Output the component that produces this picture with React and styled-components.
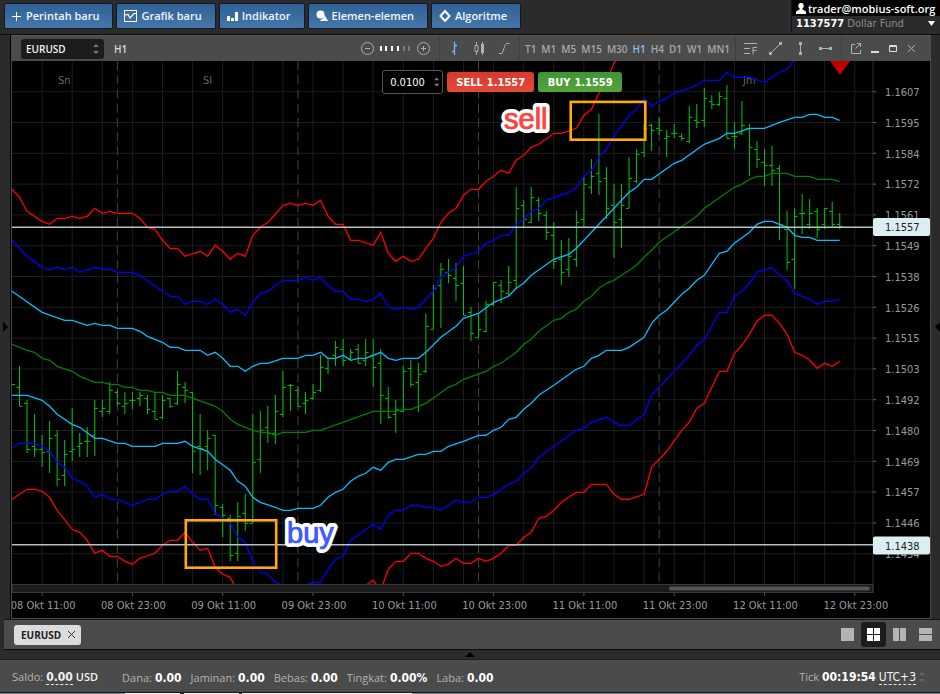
import React, { useState } from "react";
import styled, { createGlobalStyle } from "styled-components";

const GlobalStyle = createGlobalStyle`
  * {
    box-sizing: border-box;
  }

  body {
    margin: 0;
    background: #2b2b2b;
    color: #fff;
    font-family: "Open Sans", "Noto Sans", sans-serif;
    font-size: 11px;
  }

  button, input, select {
    margin: 0;
    padding: 0;
    border: 0;
    background: none;
    color: inherit;
    font: inherit;
  }

  button {
    cursor: pointer;
  }

  svg {
    display: block;
  }
`;

const tahoma = `"DejaVu Sans Condensed", "DejaVu Sans", sans-serif`;

const Page = styled.div`
  display: flex;
  flex-direction: column;
  min-height: 100vh;
`;

const Header = styled.header`
  display: flex;
  justify-content: space-between;
  align-items: flex-start;
  height: 35px;
  border-bottom: 1px solid #0a0a0a;
`;

const Menu = styled.nav`
  display: flex;
  gap: 3px;
  padding: 3px 4px;
`;

const MenuButton = styled.button`
  display: flex;
  align-items: center;
  gap: 4px;
  height: 26px;
  padding: 0 13px 2px 7px;
  border: 1px solid #0f1a28;
  border-radius: 2px;
  background: linear-gradient(to bottom, #2f6197, #4577ab);
  color: #eef4fa;
  font-weight: 600;
  white-space: nowrap;
`;

const Account = styled.div`
  width: 149px;
  border-left: 1px solid #111;
  white-space: nowrap;
`;

const AccountUser = styled.div`
  display: flex;
  align-items: center;
  gap: 2px;
  height: 16px;
  padding-left: 4px;
  background: #000;
  font-weight: 600;
`;

const AccountNumber = styled.div`
  display: flex;
  align-items: center;
  justify-content: space-between;
  height: 16px;
  padding: 0 5px 2px 4px;
  color: #8c8c8c;
  font-family: ${tahoma};
  font-size: 11px;

  b {
    color: #fff;
  }
`;

const Main = styled.main`
  display: flex;
  flex: 1;
`;

const Rail = styled.button`
  display: flex;
  align-items: center;
  justify-content: ${({ $side }) => ($side === "left" ? "flex-start" : "flex-end")};
  width: ${({ $side }) => ($side === "left" ? "11px" : "9px")};
  padding: ${({ $side }) => ($side === "left" ? "0 0 0 3px" : "0")};
  border-right: ${({ $side }) => ($side === "left" ? "1px solid #000" : "0")};
  background: #2b2b2b;
`;

const ChartWindow = styled.section`
  flex: 1;
  min-width: 0;
  border: 1px solid #4b4b4b;
  border-top: 0;
  background: #000;
`;

const ChartBar = styled.div`
  display: flex;
  align-items: stretch;
  height: 26px;
  border-top: 1px solid #5a5a5a;
  background: #4b4b4b;
  color: #a8a8a8;
  font-size: 10px;
  font-weight: 600;
`;

const BarGroup = styled.div`
  display: flex;
  align-items: center;
  gap: ${({ $gap }) => $gap || 0}px;
  padding: 0 ${({ $right }) => $right ?? 5}px 0 ${({ $left }) => $left ?? 5}px;
  border-right: ${({ $last }) => ($last ? "0" : "1px solid #404040")};
  ${({ $push }) => $push && "margin-left: auto;"}
`;

const IconButton = styled.button`
  display: flex;
  align-items: center;
  justify-content: center;
  color: ${({ $active }) => ($active ? "#7db8ec" : "#b0b0b0")};
`;

const SymbolField = styled.label`
  position: relative;
  display: flex;
  align-items: center;
  width: 83px;
  height: 20px;
  border-radius: 3px;
  background: #1c1c1c;
  color: #f2f2f2;

  svg {
    position: absolute;
    right: 5px;
    pointer-events: none;
  }
`;

const SymbolSelect = styled.select`
  appearance: none;
  width: 100%;
  height: 100%;
  padding: 0 18px 0 5px;
`;

const Period = styled.span`
  color: #d8d8d8;
`;

const TimeframeButton = styled.button`
  color: ${({ $active }) => ($active ? "#86bff0" : "#a8a8a8")};
`;

const ChartBody = styled.div`
  position: relative;
`;

const ChartSvg = styled.svg`
  width: 100%;
  height: auto;
`;

const OrderPanel = styled.form`
  position: absolute;
  top: 9px;
  left: 40%;
  display: flex;
  align-items: center;
  gap: 4px;
  padding-left: 3px;
  font-family: ${tahoma};
`;

const VolumeField = styled.label`
  display: flex;
  align-items: center;
  width: 61px;
  height: 24px;
  padding: 0 3px 0 7px;
  border: 1px solid #555;
  border-radius: 3px;
  background: #000;
`;

const VolumeInput = styled.input`
  width: 100%;
  min-width: 0;
  outline: 0;
`;

const TradeButton = styled.button`
  display: flex;
  align-items: center;
  justify-content: center;
  gap: 4px;
  width: ${({ $side }) => ($side === "sell" ? "87px" : "84px")};
  height: 20px;
  border-radius: 3px;
  background: ${({ $side }) =>
    $side === "sell"
      ? "linear-gradient(to bottom, #d8382f, #e34a37)"
      : "linear-gradient(to bottom, #3f9433, #55a43c)"};
  font-weight: 700;
`;

const TabBar = styled.div`
  display: flex;
  align-items: center;
  justify-content: space-between;
  height: 31px;
  margin-left: 4px;
  padding: 0 2px 0 10px;
  border-top: 1px solid #111;
  border-bottom: 1px solid #0a0a0a;
  background: #4b4b4b;
`;

const Tab = styled.div`
  display: flex;
  align-items: center;
  gap: 6px;
  height: 20px;
  padding: 0 5px 0 7px;
  border-radius: 3px;
  background: #dcdcdc;
  color: #222;
  font-size: 10px;
  font-weight: 700;
`;

const LayoutButtons = styled.div`
  display: flex;
  align-items: center;
  gap: 1px;
`;

const LayoutButton = styled.button`
  display: flex;
  align-items: center;
  justify-content: center;
  width: 25px;
  height: 25px;
  border-radius: 3px;
  background: ${({ $active }) => ($active ? "#1c1c1c" : "transparent")};
  color: ${({ $active }) => ($active ? "#fff" : "#b4b4b4")};
`;

const Splitter = styled.button`
  display: flex;
  align-items: center;
  justify-content: center;
  height: 10px;
  border-bottom: 1px solid #1d1d1d;
  background: #2b2b2b;
`;

const Footer = styled.footer`
  display: flex;
  align-items: center;
  gap: 9px;
  height: 32px;
  padding: 2px 15px 0 12px;
  background: #4b4b4b;
  white-space: nowrap;
`;

const Stat = styled.div`
  display: flex;
  align-items: baseline;
  gap: 3px;
  margin-right: ${({ $wide }) => ($wide ? "15px" : "0")};
  color: #b2b2b2;

  b {
    color: #fff;
    font-family: ${tahoma};
    font-size: 12px;
  }
`;

const Clock = styled.div`
  display: flex;
  align-items: center;
  gap: 3px;
  margin-left: auto;
`;

const Dashed = styled.button`
  border-bottom: 1px dashed #e6e6e6;
  color: #f2f2f2;
  font-family: ${tahoma};
  font-size: 12px;
  font-weight: ${({ $bold }) => ($bold ? 700 : 400)};
  line-height: 14px;
`;

const Currency = styled.span`
  color: #f2f2f2;
  font-weight: 600;
`;

const Taskbar = styled.div`
  height: 2px;
  border-top: 1px solid #16181b;
  background: linear-gradient(
    to right,
    #7d8590 125px,
    #f4f4f4 125px 180px,
    #333 180px 184px,
    #f4f4f4 184px 239px,
    #333 239px 242px,
    #f4f4f4 242px 412px,
    #7d8590 412px
  );
`;

const BAR = 7.525;
const LEFT = 12;
const xAt = (k) => LEFT + k * BAR;

// band points are [bar, y]
const bands = [
  {
    color: "#ff0000",
    points: [
      [0,189],[1,197],[2,211],[4,221],[5,224],[6,218],[7,218],[8,216],[9,218],[10,216],[11,208],[12,213],[13,211],
      [14,213],[16,213],[17,218],[18,227],[19,229],[20,240],[21,248],[22,248],[23,256],[25,251],[26,256],[27,245],
      [28,251],[29,259],[30,253],[31,256],[32,235],[33,227],[34,222],[35,214],[36,205],[37,203],[38,205],[39,203],
      [40,205],[41,200],[42,216],[43,224],[44,224],[45,240],[46,240],[48,245],[49,232],[50,253],[51,261],[52,256],
      [53,261],[54,259],[55,248],[56,238],[57,222],[58,213],[59,208],[60,195],[61,189],[62,189],[63,181],[64,176],
      [65,170],[66,173],[67,160],[68,155],[69,147],[70,144],[72,133],[73,133],[75,128],[76,115],[77,109],[78,93],
      [79,80],[80,63],[81,50],
    ],
  },
  {
    color: "#0000ff",
    points: [
      [0,240],[2,256],[4,267],[5,269],[6,267],[7,269],[8,267],[9,272],[11,267],[12,269],[13,269],[14,272],[16,272],
      [17,275],[20,291],[21,296],[22,296],[23,304],[24,301],[25,301],[26,304],[27,299],[28,304],[29,312],[30,309],
      [31,315],[32,302],[33,293],[34,291],[36,280],[38,280],[39,277],[40,280],[41,277],[42,285],[43,291],[44,291],
      [45,299],[46,299],[47,301],[48,299],[49,293],[50,307],[51,309],[52,307],[53,309],[54,307],[55,299],[56,291],
      [57,277],[59,267],[60,256],[62,251],[63,243],[64,240],[65,235],[66,235],[67,224],[68,219],[69,211],[70,208],
      [71,200],[74,192],[75,187],[76,176],[77,170],[78,157],[79,149],[80,136],[82,115],[83,109],[84,98],[85,106],
      [86,101],[87,98],[88,93],[91,85],[92,80],[94,80],[95,72],[96,77],[98,77],[100,82],[102,72],[103,69],[104,59],
    ],
  },
  {
    color: "#00bfff",
    points: [
      [0,291],[4,312],[7,320],[8,320],[10,325],[11,323],[12,325],[13,325],[14,328],[16,328],[17,331],[18,336],
      [20,342],[21,347],[22,347],[23,350],[25,350],[26,355],[27,352],[28,358],[29,366],[30,366],[31,371],[32,366],
      [33,363],[34,363],[36,358],[38,358],[39,355],[40,355],[41,352],[42,358],[43,358],[44,355],[45,360],[46,358],
      [47,358],[49,352],[50,358],[51,360],[52,358],[54,358],[55,352],[57,337],[59,326],[60,318],[62,313],[64,302],
      [66,296],[67,288],[68,283],[69,275],[72,259],[74,254],[75,248],[80,208],[82,192],[83,187],[84,179],[85,179],
      [88,163],[89,160],[92,144],[94,138],[95,133],[96,133],[98,128],[100,128],[102,122],[104,117],[105,117],
      [106,114],[107,114],[108,117],[109,117],[110,120],
    ],
  },
  {
    color: "#008000",
    points: [
      [0,344],[2,350],[3,352],[4,358],[5,360],[6,366],[8,371],[9,376],[11,382],[12,382],[13,384],[14,384],[15,387],
      [16,387],[17,390],[18,390],[19,392],[20,392],[21,395],[23,395],[27,406],[28,411],[29,419],[30,424],[32,430],
      [33,432],[34,432],[35,435],[36,432],[39,432],[40,430],[41,430],[48,411],[51,411],[52,409],[53,409],[55,403],
      [58,387],[59,384],[60,379],[63,371],[64,366],[65,363],[67,352],[68,344],[69,339],[70,331],[72,320],[73,318],
      [74,312],[75,309],[76,301],[77,296],[78,288],[79,283],[80,280],[81,275],[83,265],[84,257],[85,250],[86,242],
      [91,216],[92,208],[96,187],[97,184],[98,179],[99,176],[100,176],[101,173],[103,173],[104,176],[106,176],
      [107,179],[109,179],[110,181],
    ],
  },
  {
    color: "#00bfff",
    points: [
      [0,395],[2,395],[4,400],[5,406],[6,414],[8,424],[9,427],[11,438],[12,438],[14,443],[15,443],[16,446],[19,446],
      [20,443],[22,443],[23,441],[24,446],[26,451],[27,459],[29,470],[30,481],[31,486],[32,497],[33,502],[35,507],
      [36,510],[37,510],[38,508],[40,508],[41,505],[42,497],[43,492],[44,489],[45,481],[46,476],[47,473],[48,467],
      [49,470],[50,462],[51,459],[52,459],[54,454],[55,454],[56,451],[57,451],[58,446],[60,441],[62,435],[63,435],
      [64,430],[65,427],[66,419],[67,417],[68,409],[69,403],[70,395],[72,385],[75,369],[76,366],[77,358],[78,355],
      [79,350],[81,350],[82,347],[84,337],[85,323],[86,315],[87,310],[89,294],[90,288],[91,280],[92,275],[94,253],
      [95,251],[96,243],[98,232],[99,224],[100,221],[101,221],[102,224],[103,227],[104,235],[105,237],[106,237],
      [107,240],[110,240],
    ],
  },
  {
    color: "#0000ff",
    points: [
      [0,448],[1,443],[3,443],[4,446],[5,451],[6,462],[7,467],[8,478],[9,481],[10,486],[11,497],[12,494],[13,499],
      [14,499],[16,505],[18,499],[19,499],[20,494],[21,491],[22,491],[23,486],[24,494],[25,499],[26,499],[27,513],
      [28,518],[29,523],[30,537],[31,542],[32,561],[33,572],[34,574],[35,582],[36,585],[39,585],[40,582],[41,582],
      [42,569],[43,559],[44,556],[45,540],[48,524],[49,529],[50,515],[51,510],[52,510],[53,505],[54,505],[55,507],
      [56,507],[57,510],[59,500],[60,502],[61,502],[62,497],[63,497],[64,494],[66,484],[67,481],[68,473],[69,468],
      [70,457],[75,430],[76,428],[77,422],[79,417],[80,422],[81,425],[82,425],[84,414],[85,395],[89,363],[90,355],
      [91,345],[92,339],[94,312],[95,312],[96,296],[97,291],[98,283],[99,272],[101,267],[102,275],[103,280],
      [104,293],[105,296],[106,299],[107,304],[108,301],[109,301],[110,299],
    ],
  },
  {
    color: "#ff0000",
    points: [
      [0,499],[2,489],[3,489],[4,491],[5,497],[6,510],[8,529],[9,532],[10,540],[11,553],[12,550],[13,556],[14,556],
      [15,561],[16,564],[17,558],[19,553],[20,545],[21,540],[22,540],[23,532],[24,542],[25,550],[26,548],[27,567],
      [28,574],[29,577],[30,591],[46,591],[47,585],[48,580],[49,590],[50,569],[51,561],[52,561],[53,553],[54,553],
      [55,558],[56,561],[57,566],[58,564],[59,558],[60,563],[61,563],[62,558],[63,561],[64,558],[65,553],[66,545],
      [67,545],[68,537],[69,532],[70,518],[71,516],[72,510],[73,502],[75,492],[76,492],[77,484],[79,484],[80,494],
      [81,499],[82,499],[84,494],[85,467],[87,451],[89,430],[90,422],[91,408],[92,403],[94,371],[95,371],[96,353],
      [97,345],[98,334],[99,321],[100,315],[101,315],[102,323],[103,334],[104,352],[105,355],[106,360],[107,368],
      [108,363],[109,366],[110,361],
    ],
  },
];

// high, low, open, close of every hour, starting at bar 1
const bars = [
  [366,406,387,406],[400,453,403,449],[414,457,446,449],[435,467,449,452],[421,473,451,438],[430,486,435,479],
  [440,486,475,454],[408,461,451,449],[433,457,446,443],[427,457,441,441],[400,456,435,408],[400,417,411,408],
  [382,414,411,390],[390,406,392,403],[392,414,406,403],[392,409,400,400],[392,406,398,395],[395,414,398,409],
  [392,419,411,419],[395,419,417,400],[398,408,398,406],[371,405,403,384],[382,403,387,390],[392,473,392,451],
  [414,475,446,448],[430,470,446,438],[435,515,435,505],[504,537,507,515],[515,561,518,555],[502,561,553,516],
  [494,531,513,523],[414,523,523,462],[411,473,459,430],[406,443,427,433],[395,444,433,411],[371,417,414,387],
  [384,411,385,385],[386,406,390,406],[392,414,403,400],[384,400,398,392],[355,392,390,367],[358,374,368,358],
  [341,366,355,347],[339,366,349,360],[349,360,358,352],[344,363,349,363],[339,366,360,352],[339,387,355,367],
  [349,424,363,395],[387,419,398,417],[400,433,414,409],[366,412,411,371],[360,387,368,384],[363,412,382,374],
  [314,373,371,326],[285,329,329,288],[263,328,285,269],[259,283,272,275],[263,301,278,285],[266,315,283,315],
  [307,341,312,333],[314,337,337,329],[301,332,331,304],[282,306,304,282],[280,303,285,291],[266,296,293,282],
  [187,289,280,208],[200,227,205,219],[187,223,222,197],[197,221,200,213],[211,240,215,232],[222,269,235,261],
  [240,285,259,272],[238,277,269,256],[211,267,259,222],[177,227,219,184],[159,194,187,176],[114,195,173,181],
  [167,219,178,208],[184,258,205,222],[184,248,219,205],[157,208,208,178],[149,183,181,154],[124,157,152,128],
  [124,151,125,130],[117,135,128,130],[130,157,138,136],[124,138,133,133],[133,141,136,138],[106,143,141,117],
  [104,128,120,122],[88,127,120,98],[95,109,101,104],[92,106,104,96],[85,138,98,138],[122,149,136,136],
  [101,135,133,125],[124,176,128,147],[141,168,149,159],[149,186,162,165],[146,186,165,170],[165,240,168,224],
  [211,270,229,262],[208,289,259,216],[194,234,213,213],[199,229,224,213],[208,238,211,229],[208,229,224,208],
  [202,227,211,224],[213,229,224,226],
];

const prices = [
  "1.1607", "1.1595", "1.1584", "1.1572", "1.1561", "1.1549", "1.1538", "1.1526",
  "1.1515", "1.1503", "1.1492", "1.1480", "1.1469", "1.1457", "1.1446", "1.1434",
];

const times = [
  "08 Okt 11:00", "08 Okt 23:00", "09 Okt 11:00", "09 Okt 23:00", "10 Okt 11:00",
  "10 Okt 23:00", "11 Okt 11:00", "11 Okt 23:00", "12 Okt 11:00", "12 Okt 23:00",
];

const timeframes = ["T1", "M1", "M5", "M15", "M30", "H1", "H4", "D1", "W1", "MN1"];

const days = [["Sn", 58], ["Sl", 203], ["Jm", 743]];

const priceY = (i) => 91.7 + i * 30.8;

const Arrows = ({ color = "#777" }) => (
  <svg width="6" height="12" viewBox="0 0 6 12" fill={color}>
    <path d="M0 4L3 1L6 4Z M0 8L3 11L6 8Z" />
  </svg>
);

const Cross = ({ size = 9 }) => (
  <svg width={size} height={size} viewBox="0 0 9 9" stroke="currentColor" fill="none">
    <path d="M1 1L8 8M8 1L1 8" />
  </svg>
);

const menuItems = [
  {
    label: "Perintah baru",
    icon: (
      <svg width="10" height="12" viewBox="0 0 10 12" stroke="#fff" strokeWidth="1">
        <path d="M0 7.5H9M4.5 3V12" />
      </svg>
    ),
  },
  {
    label: "Grafik baru",
    icon: (
      <svg width="13" height="13" viewBox="0 0 13 13" stroke="#fff" fill="none">
        <rect x="0.5" y="1.5" width="12" height="11" />
        <path d="M1 6L4 5.5L6 9L10 4.5H12" strokeWidth="1.2" />
      </svg>
    ),
  },
  {
    label: "Indikator",
    icon: (
      <svg width="11" height="12" viewBox="0 0 11 12" fill="#fff">
        <path d="M0 7H3V12H0ZM4 9H7V12H4ZM8 3H11V12H8Z" />
      </svg>
    ),
  },
  {
    label: "Elemen-elemen",
    icon: (
      <svg width="12" height="12" viewBox="0 0 12 12" fill="#fff">
        <circle cx="4.5" cy="5.5" r="4" />
        <path d="M8.5 6L12 12H4L5 10.5A5 5 0 0 0 8.5 6Z" />
      </svg>
    ),
  },
  {
    label: "Algoritme",
    icon: (
      <svg width="12" height="13" viewBox="0 0 12 13" fill="none" stroke="#fff" strokeWidth="2">
        <path d="M6 2L10.5 7L6 12L1.5 7Z" />
      </svg>
    ),
  },
];

const chartTypes = [
  {
    name: "Bar",
    icon: <path d="M7.5 1V14M7.5 4.5H10M5 10.5H7.5" strokeWidth="1.3" />,
  },
  {
    name: "Lilin",
    icon: <path d="M4.5 1V4M3 4.5H6V10.5H3ZM4.5 11V14M10.5 1V14M9.5 3V12M11.5 3V12" />,
  },
  {
    name: "Garis",
    icon: <path d="M2 12.5H5L8 4.5L9.5 2.5H12.5" />,
  },
];

const drawTools = [
  {
    name: "Fibonacci",
    icon: (
      <>
        <path d="M1 2.5H14M1 7.5H7M1 12.5H7M10 13.5V6.5H14M10 9.5H13.5" />
      </>
    ),
  },
  {
    name: "Garis tren",
    icon: (
      <>
        <path d="M3 12L12 3" />
        <path d="M1 11H4V14H1ZM11 1H14V4H11Z" fill="currentColor" stroke="none" />
      </>
    ),
  },
  {
    name: "Garis vertikal",
    icon: (
      <>
        <path d="M7.5 2V13" />
        <path d="M6 1H9V4H6ZM6 11H9V14H6Z" fill="currentColor" stroke="none" />
      </>
    ),
  },
  {
    name: "Garis horizontal",
    icon: (
      <>
        <path d="M2 7.5H13" />
        <path d="M1 6H4V9H1ZM11 6H14V9H11Z" fill="currentColor" stroke="none" />
      </>
    ),
  },
];

const layouts = [
  { name: "Satu", path: "M0 0H13V13H0Z" },
  { name: "Empat", path: "M0 0H6V6H0ZM7 0H13V6H7ZM0 7H6V13H0ZM7 7H13V13H7Z" },
  { name: "Kolom", path: "M0 0H6V13H0ZM7 0H13V13H7Z" },
  { name: "Baris", path: "M0 0H13V6H0ZM0 7H13V13H0Z" },
];

const PriceTag = ({ y, price }) => (
  <g>
    <rect x="873" y={y - 9} width="57" height="18" rx="2" fill="#dceef2" />
    <text x="885" y={y + 4} fill="#222">{price}</text>
  </g>
);

const Chart = () => (
  <ChartSvg viewBox="12 61 918 557" fontFamily={tahoma} fontSize="11" role="img" aria-label="EURUSD H1">
    <defs>
      <clipPath id="plot">
        <rect x="12" y="61" width="861" height="524" />
      </clipPath>
    </defs>
    <g stroke="#1d1d1d">
      {prices.map((p, i) => (
        <path key={p} d={`M12 ${priceY(i)}H873`} />
      ))}
      {Array.from({ length: 28 }, (_, i) => (
        <path key={i} d={`M${xAt(4 + i * 4)} 61V584`} />
      ))}
      <path d="M873 61V592" stroke="#2c2c2c" />
    </g>
    <g stroke="#444" strokeDasharray="9.2 5">
      {[14, 38, 62, 86].map((k) => (
        <path key={k} d={`M${xAt(k)} 61V584`} />
      ))}
    </g>
    <g fill="#666">
      {days.map(([name, x]) => (
        <text key={name} x={x} y="84">{name}</text>
      ))}
    </g>

    <g clipPath="url(#plot)" fill="none">
      <g stroke="#00c800">
        <path d="M12 384.5H15" />
        {bars.map(([high, low, open, close], i) => {
          const x = xAt(i + 1);
          return (
            <path key={i} d={`M${x} ${high}V${low}M${x - 3} ${open + 0.4}H${x}M${x} ${close + 0.4}H${x + 3}`} />
          );
        })}
      </g>
      {bands.map(({ color, points }, i) => (
        <polyline
          key={i}
          stroke={color}
          strokeWidth="1.3"
          points={points.map(([k, y]) => `${xAt(k)},${y + 0.3}`).join(" ")}
        />
      ))}
      <path d="M12 227.3H873M12 544.8H873" stroke="#b4c4c6" strokeWidth="1.6" />
    </g>
    <path d="M830 61H850L840 75Z" fill="#c00000" />

    <rect x="12" y="584.5" width="861" height="8" fill="#1c1c1c" stroke="#383838" />
    <rect x="669" y="586.5" width="201" height="4" rx="2" fill="#555" />

    <g fill="#9a9a9a" stroke="none">
      {prices.map((p, i) => (
        <g key={p}>
          <path d={`M873 ${priceY(i)}H876`} stroke="#666" />
          <text x="885" y={priceY(i) + 4.3}>{p}</text>
        </g>
      ))}
      {times.map((t, i) => (
        <g key={t}>
          <path d={`M${xAt(4 + i * 12)} 593V596`} stroke="#555" />
          <text x={xAt(4 + i * 12) + 1} y="609" textAnchor="middle">{t}</text>
        </g>
      ))}
    </g>
    <PriceTag y={227} price="1.1557" />
    <PriceTag y={545.5} price="1.1438" />

    <g fill="none" stroke="#ffa90a" strokeWidth="2.6">
      <rect x="570.7" y="101.9" width="74.6" height="37.8" />
      <rect x="185.8" y="520.3" width="90.4" height="47.4" />
    </g>
    <g
      fontFamily="Liberation Sans, Arial, sans-serif"
      fontSize="29"
      stroke="#fff"
      strokeLinejoin="round"
    >
      <text x="504" y="129" fill="#ff4444" strokeWidth="8" paintOrder="stroke">sell</text>
      <text x="504" y="129" fill="#ff4444" stroke="#ff4444" strokeWidth="0.7">sell</text>
      <text x="287" y="543" fill="#405cff" strokeWidth="8" paintOrder="stroke">buy</text>
      <text x="287" y="543" fill="#405cff" stroke="#405cff" strokeWidth="0.7">buy</text>
    </g>
  </ChartSvg>
);

const App = () => {
  const [timeframe, setTimeframe] = useState("H1");
  const [chartType, setChartType] = useState("Bar");
  const [layout, setLayout] = useState("Empat");
  const [volume, setVolume] = useState("0.0100");

  return (
    <Page>
      <GlobalStyle />
      <Header>
        <Menu>
          {menuItems.map(({ label, icon }) => (
            <MenuButton key={label}>
              {icon}
              {label}
            </MenuButton>
          ))}
        </Menu>
        <Account>
          <AccountUser>
            <svg width="10" height="11" viewBox="0 0 10 11" fill="#fff">
              <path d="M5 0A2.6 2.8 0 0 1 6.5 5.2V6.5L10 8.5V11H0V8.5L3.5 6.5V5.2A2.6 2.8 0 0 1 5 0Z" />
            </svg>
            trader@mobius-soft.org
          </AccountUser>
          <AccountNumber>
            <span><b>1137577</b> Dollar Fund</span>
            <svg width="7" height="5" viewBox="0 0 7 5" fill="#fff">
              <path d="M0 0H7L3.5 5Z" />
            </svg>
          </AccountNumber>
        </Account>
      </Header>

      <Main>
        <Rail $side="left" aria-label="Panel kiri">
          <svg width="5" height="10" viewBox="0 0 5 10">
            <path d="M0 0L5 5L0 10Z" />
          </svg>
        </Rail>
        <ChartWindow>
          <ChartBar>
            <BarGroup $gap={10} $left={9} $last>
              <SymbolField>
                <SymbolSelect aria-label="Simbol" defaultValue="EURUSD">
                  <option>EURUSD</option>
                </SymbolSelect>
                <Arrows />
              </SymbolField>
              <Period>H1</Period>
            </BarGroup>
            <BarGroup $push $gap={6} $right={9}>
              <IconButton aria-label="Perkecil">
                <svg width="13" height="13" viewBox="0 0 13 13" fill="none" stroke="currentColor">
                  <circle cx="6.5" cy="6.5" r="6" />
                  <path d="M4 6.5H9" />
                </svg>
              </IconButton>
              <svg width="31" height="5" viewBox="0 0 31 5">
                <path d="M0 0H2V5H0ZM5 0H7V5H5ZM11 0H13V5H11ZM17 0H19V5H17Z" fill="#fff" />
                <path d="M23 0H25V5H23ZM28 0H30V5H28Z" fill="#7a7a7a" />
              </svg>
              <IconButton aria-label="Perbesar">
                <svg width="13" height="13" viewBox="0 0 13 13" fill="none" stroke="currentColor">
                  <circle cx="6.5" cy="6.5" r="6" />
                  <path d="M4 6.5H9M6.5 4V9" />
                </svg>
              </IconButton>
            </BarGroup>
            <BarGroup $gap={10} $left={7} $right={7}>
              {chartTypes.map(({ name, icon }) => (
                <IconButton
                  key={name}
                  aria-label={name}
                  $active={name === chartType}
                  onClick={() => setChartType(name)}
                >
                  <svg width="15" height="15" viewBox="0 0 15 15" fill="none" stroke="currentColor">
                    {icon}
                  </svg>
                </IconButton>
              ))}
            </BarGroup>
            <BarGroup $gap={5}>
              {timeframes.map((t) => (
                <TimeframeButton key={t} $active={t === timeframe} onClick={() => setTimeframe(t)}>
                  {t}
                </TimeframeButton>
              ))}
            </BarGroup>
            <BarGroup $gap={10} $left={7} $right={8}>
              {drawTools.map(({ name, icon }) => (
                <IconButton key={name} aria-label={name}>
                  <svg width="15" height="15" viewBox="0 0 15 15" fill="none" stroke="currentColor">
                    {icon}
                  </svg>
                </IconButton>
              ))}
            </BarGroup>
            <BarGroup $gap={10} $left={9} $right={14} $last>
              <IconButton aria-label="Lepas">
                <svg width="10" height="11" viewBox="0 0 10 11" fill="none" stroke="currentColor">
                  <path d="M4 1.5H0.5V10.5H9.5V7M6 0.5H9.5V4M9.5 0.5L4.5 5.5" />
                </svg>
              </IconButton>
              <IconButton aria-label="Minimalkan">
                <svg width="8" height="10" viewBox="0 0 8 10" fill="#ddd">
                  <path d="M0 7H8V9H0Z" />
                </svg>
              </IconButton>
              <IconButton aria-label="Maksimalkan">
                <svg width="8" height="8" viewBox="0 0 8 8" fill="none" stroke="#ddd">
                  <path d="M0.5 0.5H7.5V6.5H0.5ZM0 1.5H8" />
                </svg>
              </IconButton>
              <IconButton aria-label="Tutup">
                <Cross />
              </IconButton>
            </BarGroup>
          </ChartBar>
          <ChartBody>
            <Chart />
            <OrderPanel onSubmit={(e) => e.preventDefault()}>
              <VolumeField>
                <VolumeInput aria-label="Volume" value={volume} onChange={(e) => setVolume(e.target.value)} />
                <Arrows />
              </VolumeField>
              <TradeButton $side="sell" type="button">
                <span>SELL</span>
                <span>1.1557</span>
              </TradeButton>
              <TradeButton $side="buy" type="button">
                <span>BUY</span>
                <span>1.1559</span>
              </TradeButton>
            </OrderPanel>
          </ChartBody>
        </ChartWindow>
        <Rail $side="right" aria-label="Panel kanan">
          <svg width="5" height="10" viewBox="0 0 5 10">
            <path d="M5 0L0 5L5 10Z" />
          </svg>
        </Rail>
      </Main>

      <TabBar>
        <Tab>
          EURUSD
          <IconButton aria-label="Tutup tab">
            <svg width="9" height="9" viewBox="0 0 9 9" stroke="#333">
              <path d="M1 1L8 8M8 1L1 8" />
            </svg>
          </IconButton>
        </Tab>
        <LayoutButtons>
          {layouts.map(({ name, path }) => (
            <LayoutButton
              key={name}
              aria-label={name}
              $active={name === layout}
              onClick={() => setLayout(name)}
            >
              <svg width="13" height="13" viewBox="0 0 13 13" fill="currentColor">
                <path d={path} />
              </svg>
            </LayoutButton>
          ))}
        </LayoutButtons>
      </TabBar>
      <Splitter aria-label="Buka panel bawah">
        <svg width="10" height="5" viewBox="0 0 10 5">
          <path d="M0 5L5 0L10 5Z" />
        </svg>
      </Splitter>
      <Footer>
        <Stat $wide>
          Saldo: <Dashed $bold>0.00</Dashed> <Currency>USD</Currency>
        </Stat>
        <Stat>Dana: <b>0.00</b></Stat>
        <Stat>Jaminan: <b>0.00</b></Stat>
        <Stat>Bebas: <b>0.00</b></Stat>
        <Stat>Tingkat: <b>0.00%</b></Stat>
        <Stat>Laba: <b>0.00</b></Stat>
        <Clock>
          <Stat>
            Tick <b>00:19:54</b> <Dashed>UTC+3</Dashed>
          </Stat>
          <Arrows color="#666" />
        </Clock>
      </Footer>
      <Taskbar />
    </Page>
  );
};

export default App;
